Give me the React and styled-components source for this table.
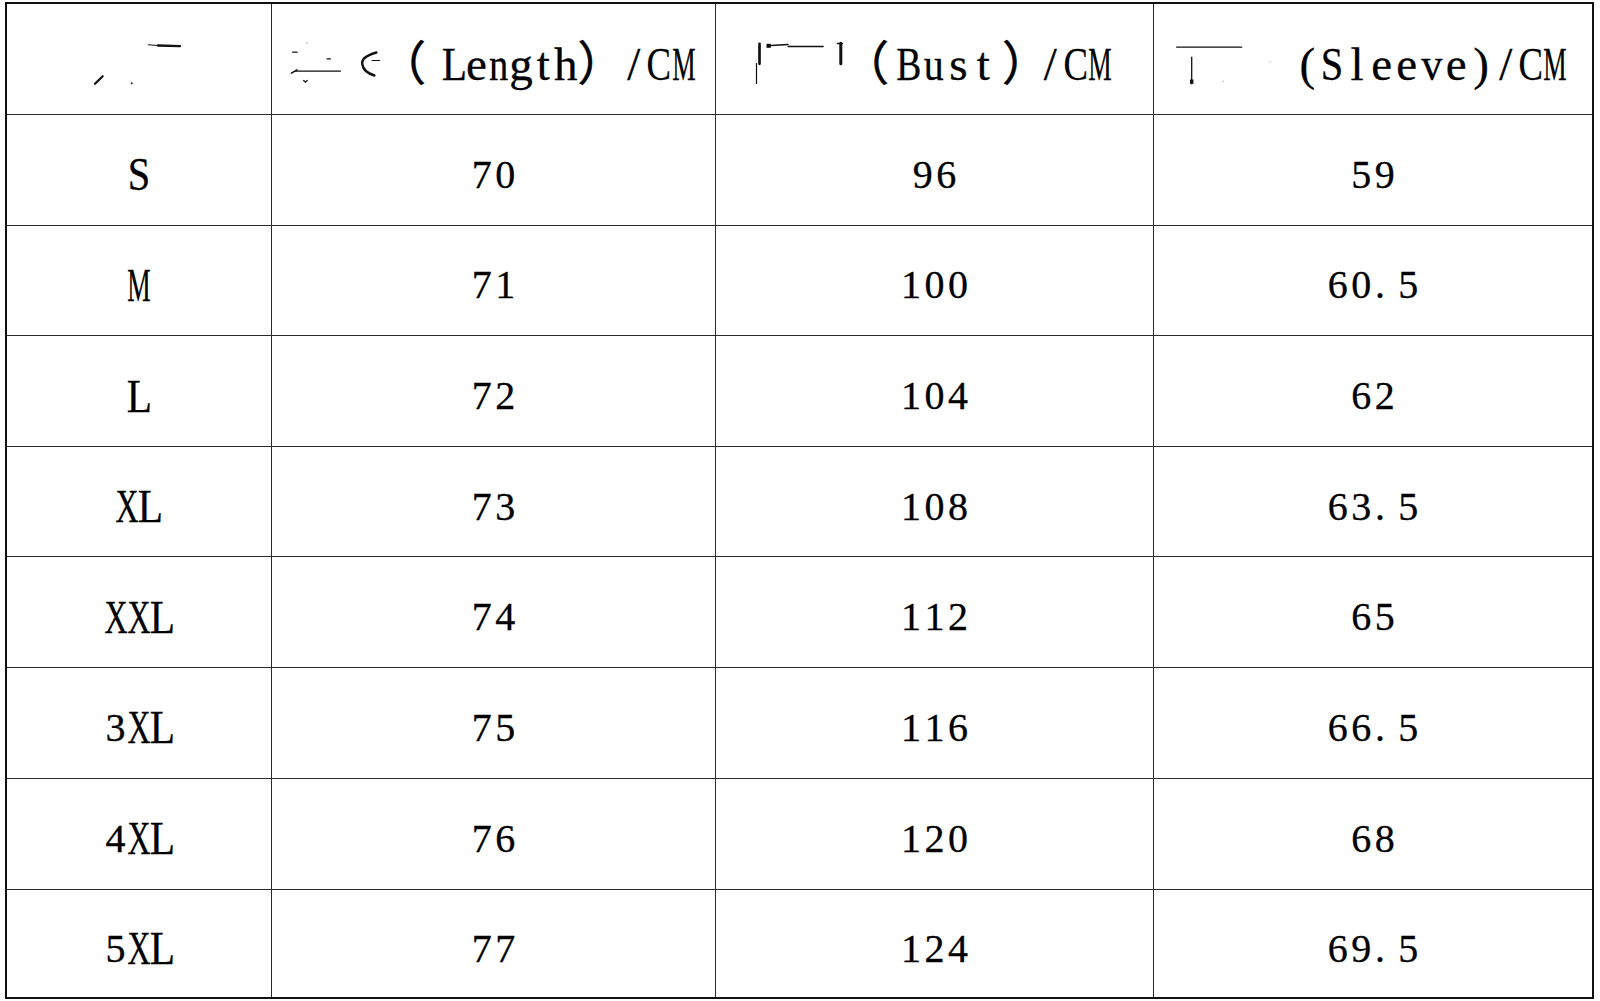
import React from 'react'
import styled, { createGlobalStyle } from 'styled-components'

const GlobalStyle = createGlobalStyle`
  html, body {
    margin: 0;
    padding: 0;
    background: #fff;
  }
  body {
    font-family: "Liberation Serif", "Noto Sans CJK SC", serif;
    color: #000;
  }
`

const rows = [
  ['S', '70', '96', '59'],
  ['M', '71', '100', '60.5'],
  ['L', '72', '104', '62'],
  ['XL', '73', '108', '63.5'],
  ['XXL', '74', '112', '65'],
  ['3XL', '75', '116', '66.5'],
  ['4XL', '76', '120', '68'],
  ['5XL', '77', '124', '69.5'],
]

// half-width glyph boxes, squeezed the way the sheet's font draws them
const SCALE = { M: 0.56, X: 0.68, C: 0.78, B: 0.8, S: 0.86, L: 0.88, n: 0.82, u: 0.85, v: 0.9 }
const isDigit = (c) => /[0-9.]/.test(c)
const isWide = (c) => c === '（' || c === '）'

// inkAt: where the full-width bracket's pen origin sits inside its box
const Glyphs = ({ text, unit = 23.5, wide, inkAt = {} }) => (
  <>
    {[...text].map((c, i) =>
      isWide(c) ? (
        <Ch key={i} $w={wide || unit * 2} $start>
          <Paren $at={inkAt[c] ?? 0}>{c}</Paren>
        </Ch>
      ) : (
        <Ch key={i} $w={unit} $dot={c === '.'}>
          <Ink $size={isDigit(c) ? 40 : 47} $sx={SCALE[c] || 1}>{c}</Ink>
        </Ch>
      )
    )}
  </>
)

export default function App() {
  return (
    <Page>
      <GlobalStyle />
      <Table>
        <Cell $head $first>
          <Smudge width="94" height="47" viewBox="0 0 94 47">
            <line x1="56.3" y1="3.8" x2="66" y2="4.5" strokeWidth="1.1" />
            <line x1="66" y1="4.5" x2="88" y2="5.2" strokeWidth="2.3" />
            <line x1="3" y1="42.8" x2="10.7" y2="35.2" strokeWidth="2.2" />
            <circle cx="39.7" cy="42.2" r="1" fill="#222" stroke="none" />
          </Smudge>
        </Cell>
        <Cell $head>
          <Smudge width="107.8" height="47" viewBox="0 0 107.8 47">
            <g transform="translate(-2.6 0)">
              <line x1="4.3" y1="11.2" x2="8.7" y2="11.2" strokeWidth="1.3" />
              <circle cx="18.7" cy="2.2" r="0.7" fill="#999" stroke="none" />
              <line x1="38.7" y1="17.8" x2="42" y2="17.8" strokeWidth="1.2" />
              <line x1="7" y1="30.2" x2="52" y2="30.2" strokeWidth="1.2" />
              <line x1="3" y1="32.2" x2="8.7" y2="28.8" strokeWidth="1.5" />
              <path d="M15.3 39.5 L17 41.2 L18.7 39.5" strokeWidth="1.3" />
              <path d="M88 11.5 Q72 16 74 23.5 Q75 31 86 34.5" strokeWidth="2.4" />
              <line x1="83.7" y1="19.5" x2="91.3" y2="19.5" strokeWidth="1.2" />
            </g>
          </Smudge>
          <Glyphs text="（Length）" unit={22.3} wide={44.6} inkAt={{ '（': -19.4, '）': 0.8 }} />
          <Glyphs text="/CM" unit={25} />
        </Cell>
        <Cell $head>
          <Smudge width="89.8" height="47" viewBox="0 0 89.8 47">
            <g transform="translate(-2.6 0)">
              <line x1="6.1" y1="2.8" x2="6.1" y2="22.8" strokeWidth="2.7" />
              <line x1="3.1" y1="22.5" x2="3.1" y2="42.5" strokeWidth="1.2" />
              <rect x="13.1" y="2.8" width="4.3" height="4" fill="#111" stroke="none" />
              <line x1="17.4" y1="4.5" x2="34.7" y2="3.5" strokeWidth="1.4" />
              <line x1="34.7" y1="5.5" x2="69.7" y2="5.5" strokeWidth="1.5" />
              <line x1="87.4" y1="2.2" x2="87.4" y2="22.8" strokeWidth="3" />
              <line x1="84.1" y1="2.5" x2="88.9" y2="2.5" strokeWidth="1.5" />
            </g>
          </Smudge>
          <Glyphs text="（Bust" unit={25} wide={49.8} inkAt={{ '（': -4 }} />
          <Glyphs text="）" wide={42} inkAt={{ '）': 6.2 }} />
          <Glyphs text="/CM" unit={25} />
        </Cell>
        <Cell $head>
          <Smudge width="116.8" height="47" viewBox="0 0 116.8 47">
            <line x1="-1.3" y1="6.2" x2="63.7" y2="6.2" strokeWidth="1.3" />
            <line x1="13.7" y1="16.2" x2="13.7" y2="42.8" strokeWidth="1.3" />
            <rect x="12" y="38.5" width="3.4" height="4.3" fill="#111" stroke="none" />
            <circle cx="45.3" cy="40.2" r="0.7" fill="#aaa" stroke="none" />
            <circle cx="92" cy="21.2" r="0.7" fill="#bbb" stroke="none" />
          </Smudge>
          <Glyphs text="(Sleeve)/CM" unit={24.8} />
        </Cell>

        {rows.map((row) =>
          row.map((value, col) => (
            <Cell key={row[0] + col} $first={col === 0}>
              <Glyphs text={value} />
            </Cell>
          ))
        )}
      </Table>
    </Page>
  )
}

const Page = styled.div`
  width: 1600px;
  height: 1001px;
  box-sizing: border-box;
  padding: 2px 0 0 5px;
`

const Table = styled.div`
  display: grid;
  width: 1589px;
  height: 997px;
  box-sizing: border-box;
  border: 2px solid #111;
  grid-template-columns: 264px 444px 438px 439px;
  grid-template-rows: 110px 110.5px 110.5px 111px 110px 111px 110.5px 111.5px 1fr;
`

const Cell = styled.div`
  display: flex;
  align-items: center;
  justify-content: center;
  box-sizing: border-box;
  border-left: ${(p) => (p.$first ? 'none' : '1px solid #2a2a2a')};
  border-top: ${(p) => (p.$head ? 'none' : '1px solid #2a2a2a')};
  padding-top: 10px;
  font-size: 47px;
  line-height: 1;
  white-space: nowrap;
`

const Ch = styled.span`
  display: inline-flex;
  justify-content: ${(p) => (p.$dot || p.$start ? 'flex-start' : 'center')};
  padding-left: ${(p) => (p.$dot ? '2px' : '0')};
  box-sizing: border-box;
  width: ${(p) => p.$w}px;
`

const Ink = styled.span`
  display: inline-block;
  flex-shrink: 0;
  font-size: ${(p) => p.$size}px;
  line-height: 1;
  -webkit-text-stroke: 0.3px #000;
  transform: scaleX(${(p) => p.$sx});
`

const Paren = styled.span`
  display: inline-block;
  flex-shrink: 0;
  margin-left: ${(p) => p.$at}px;
  letter-spacing: -28px;
  white-space: nowrap;
  font-size: 47px;
  line-height: 1;
  -webkit-text-stroke: 0.6px #000;
`

const Smudge = styled.svg`
  display: inline-block;
  vertical-align: -7.5px;
  overflow: visible;
  fill: none;
  stroke: #111;
  stroke-linecap: round;
`
